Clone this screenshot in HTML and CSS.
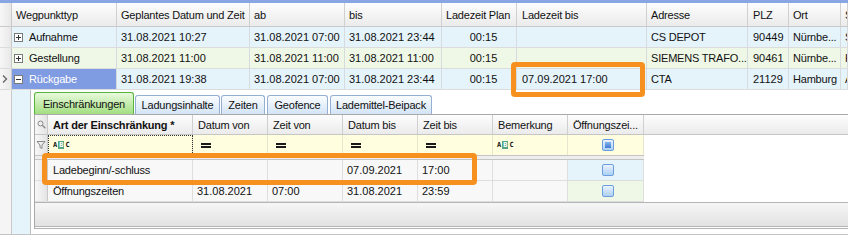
FILE: index.html
```html
<!DOCTYPE html>
<html lang="de">
<head>
<meta charset="utf-8">
<title>Wegpunkte</title>
<link rel="stylesheet" href="styles.css">
</head>
<body>
<div class="grid">
  <div class="topbar"></div>
  <div class="row head">
    <div class="ind"></div>
    <div class="cell w-typ">Wegpunkttyp</div>
    <div class="cell w-gep">Geplantes Datum und Zeit</div>
    <div class="cell w-ab">ab</div>
    <div class="cell w-bis">bis</div>
    <div class="cell w-plan">Ladezeit Plan</div>
    <div class="cell w-lbis">Ladezeit bis</div>
    <div class="cell w-adr">Adresse</div>
    <div class="cell w-plz">PLZ</div>
    <div class="cell w-ort">Ort</div>
    <div class="cell w-rest">S</div>
  </div>
  <div class="row blue">
    <div class="ind"></div>
    <div class="cell w-typ tree"><svg class="exp" width="9" height="9" viewBox="0 0 9 9"><rect x=".5" y=".5" width="8" height="8" fill="#fff" stroke="#7a7a7a"/><path d="M2 4.5h5M4.5 2v5" stroke="#333"/></svg>Aufnahme</div>
    <div class="cell w-gep">31.08.2021 10:27</div>
    <div class="cell w-ab">31.08.2021 07:00</div>
    <div class="cell w-bis">31.08.2021 23:44</div>
    <div class="cell w-plan cen">00:15</div>
    <div class="cell w-lbis"></div>
    <div class="cell w-adr">CS DEPOT</div>
    <div class="cell w-plz">90449</div>
    <div class="cell w-ort">Nürnbe...</div>
    <div class="cell w-rest">S</div>
  </div>
  <div class="row green">
    <div class="ind"></div>
    <div class="cell w-typ tree"><svg class="exp" width="9" height="9" viewBox="0 0 9 9"><rect x=".5" y=".5" width="8" height="8" fill="#fff" stroke="#7a7a7a"/><path d="M2 4.5h5M4.5 2v5" stroke="#333"/></svg>Gestellung</div>
    <div class="cell w-gep">31.08.2021 11:00</div>
    <div class="cell w-ab">31.08.2021 11:00</div>
    <div class="cell w-bis">31.08.2021 11:00</div>
    <div class="cell w-plan cen">00:15</div>
    <div class="cell w-lbis"></div>
    <div class="cell w-adr">SIEMENS TRAFO...</div>
    <div class="cell w-plz">90461</div>
    <div class="cell w-ort">Nürnbe...</div>
    <div class="cell w-rest">K</div>
  </div>
  <div class="row blue">
    <div class="ind"><svg class="chev" width="8" height="10" viewBox="0 0 8 10"><path d="M2 1.5l3.5 3.5-3.5 3.5" fill="none" stroke="#6a6a6a" stroke-width="1.4"/></svg></div>
    <div class="cell w-typ tree sel"><svg class="exp" width="9" height="9" viewBox="0 0 9 9"><rect x=".5" y=".5" width="8" height="8" fill="#fff" stroke="#7a7a7a"/><path d="M2 4.5h5" stroke="#333"/></svg>Rückgabe</div>
    <div class="cell w-gep">31.08.2021 19:38</div>
    <div class="cell w-ab">31.08.2021 07:00</div>
    <div class="cell w-bis">31.08.2021 23:44</div>
    <div class="cell w-plan cen">00:15</div>
    <div class="cell w-lbis">07.09.2021 17:00</div>
    <div class="cell w-adr">CTA</div>
    <div class="cell w-plz">21129</div>
    <div class="cell w-ort">Hamburg</div>
    <div class="cell w-rest">A</div>
  </div>
  <div class="detail">
    <div class="d-ind"></div>
    <div class="d-blue"></div>
    <div class="d-body">
      <div class="tabs">
        <div class="tab active t1">Einschränkungen</div>
        <div class="tab t2">Ladungsinhalte</div>
        <div class="tab t3">Zeiten</div>
        <div class="tab t4">Geofence</div>
        <div class="tab t5">Lademittel-Beipack</div>
      </div>
      <div class="inner">
        <div class="irow ihead">
          <div class="iind"><svg width="9" height="9" viewBox="0 0 9 9"><circle cx="3.5" cy="3.5" r="2.5" fill="none" stroke="#8a8a8a"/><path d="M5.3 5.3L8.3 8.3" stroke="#8a8a8a" stroke-width="1.4"/></svg></div>
          <div class="ic w-art bold">Art der Einschränkung *</div>
          <div class="ic w-b">Datum von</div>
          <div class="ic w-b">Zeit von</div>
          <div class="ic w-b">Datum bis</div>
          <div class="ic w-b">Zeit bis</div>
          <div class="ic w-b">Bemerkung</div>
          <div class="ic w-o">Öffnungszei...</div>
          <div class="hfill"></div>
        </div>
        <div class="irow ifilter">
          <div class="iind"><svg width="10" height="10" viewBox="0 0 10 10"><path d="M1 1.5h8L6 5v3.5L4 7.5V5z" fill="none" stroke="#8a8a8a"/></svg></div>
          <div class="ic w-art focus"><span class="abc"><i>A</i><b>B</b><i>C</i></span></div>
          <div class="ic w-b"><span class="eq"></span></div>
          <div class="ic w-b"><span class="eq"></span></div>
          <div class="ic w-b"><span class="eq"></span></div>
          <div class="ic w-b"><span class="eq"></span></div>
          <div class="ic w-b"><span class="abc"><i>A</i><b>B</b><i>C</i></span></div>
          <div class="ic w-o cen"><span class="cb"><span class="cb-in"></span></span></div>
        </div>
        <div class="isep"></div>
        <div class="irow idata">
          <div class="iind"></div>
          <div class="ic w-art">Ladebeginn/-schluss</div>
          <div class="ic w-b"></div>
          <div class="ic w-b"></div>
          <div class="ic w-b">07.09.2021</div>
          <div class="ic w-b">17:00</div>
          <div class="ic w-b"></div>
          <div class="ic w-o cen cblue"><span class="cb"></span></div>
        </div>
        <div class="irow idata">
          <div class="iind"></div>
          <div class="ic w-art">Öffnungszeiten</div>
          <div class="ic w-b">31.08.2021</div>
          <div class="ic w-b">07:00</div>
          <div class="ic w-b">31.08.2021</div>
          <div class="ic w-b">23:59</div>
          <div class="ic w-b"></div>
          <div class="ic w-o cen cgreen"><span class="cb"></span></div>
        </div>
        <div class="ifooter"></div>
      </div>
    </div>
  </div>
</div>
<div class="mark mark1"></div>
<div class="mark mark2"></div>
</body>
</html>
```
FILE: styles.css
```css
* { box-sizing: border-box; }
body {
  margin: 0;
  width: 848px;
  height: 251px;
  overflow: hidden;
  position: relative;
  background: #fff;
  font: 11px "Liberation Sans", Arial, sans-serif;
  letter-spacing: -0.2px;
  color: #111;
}
.grid { width: 848px; overflow: hidden; }
.topbar { height: 3px; background: #8aa5e4; }

.row { display: flex; height: 21px; border-bottom: 1px solid #dcdcdc; }
.row.head { height: 24px; border-bottom: 1px solid #c9c9c9; }
.cell {
  flex: none;
  display: flex;
  align-items: center;
  padding-left: 4px;
  border-right: 1px solid #d7dbe0;
  white-space: nowrap;
  overflow: hidden;
}
.head .cell { background: linear-gradient(#fdfdfd, #ebebeb); border-right-color: #d0d0d0; }
.row:not(.head) .w-gep,
.row:not(.head) .w-ab,
.row:not(.head) .w-bis,
.row:not(.head) .w-plan,
.row:not(.head) .w-lbis,
.row:not(.head) .w-plz,
.idata .w-b { letter-spacing: 0; }
.ind {
  flex: none;
  width: 12px;
  background: linear-gradient(90deg, #f7f7f7, #e8e8e8);
  border-right: 1px solid #c9c9c9;
  display: flex;
  align-items: center;
}
.chev { margin-left: 1px; }
.blue { background: #e5f3fb; }
.green { background: #eff8e6; }
.sel { background: #7f9be1; color: #fff; }
.tree { padding-left: 2px; }
.exp { flex: none; margin-right: 6px; }
.cen { justify-content: center; padding-left: 9px; }

.w-typ { width: 105px; }
.w-gep { width: 133px; }
.w-ab { width: 95px; }
.w-bis { width: 97px; }
.w-plan { width: 75px; }
.w-lbis { width: 130px; padding-left: 5px; }
.w-adr { width: 101px; }
.w-plz { width: 41px; padding-left: 5px; }
.w-ort { width: 52px; }
.w-rest { flex: 1; min-width: 0; }

.detail { display: flex; height: 145px; border-bottom: 1px solid #c4c4c4; }
.d-ind { flex: none; width: 12px; background: #f5f5f5; border-right: 1px solid #c9c9c9; }
.d-blue { flex: none; width: 19px; background: #e5f3fb; border-right: 1px solid #bcbcbc; }
.d-body { flex: 1; min-width: 0; padding: 2px 0 0 3px; background: #fff; }

.tabs { display: flex; align-items: flex-end; height: 22px; }
.tab {
  flex: none;
  height: 19px;
  margin-right: 1px;
  border: 1px solid #94afd2;
  border-bottom: none;
  border-radius: 3px 3px 0 0;
  background: linear-gradient(#fbfdff, #d3e4f6);
  display: flex;
  align-items: center;
  justify-content: center;
  white-space: nowrap;
}
.tab.active {
  height: 22px;
  border-color: #56b43a;
  background: linear-gradient(#e8fadd, #a2de80);
}
.t1 { width: 100px; }
.t2 { width: 85px; }
.t3 { width: 44px; margin-right: 2px; }
.t4 { width: 61px; margin-right: 2px; }
.t5 { width: 102px; }

.inner {
  border-top: 1px solid #a9a9a9;
  border-left: 1px solid #a9a9a9;
  border-bottom: 1px solid #b3b3b3;
  padding-bottom: 1px;
}
.irow { display: flex; height: 21px; }
.ihead { height: 20px; border-bottom: 1px solid #c6c6c6; }
.iind {
  flex: none;
  width: 13px;
  background: linear-gradient(90deg, #f8f8f8, #e4e4e4);
  border-right: 1px solid #c9c9c9;
  display: flex;
  align-items: center;
  justify-content: center;
}
.ic {
  flex: none;
  display: flex;
  align-items: center;
  padding-left: 4px;
  border-right: 1px solid #dedede;
  white-space: nowrap;
  overflow: hidden;
}
.ihead .ic { background: linear-gradient(#fdfdfd, #ebebeb); border-right-color: #cfcfcf; padding-left: 5px; }
.hfill { flex: 1; background: linear-gradient(#fdfdfd, #ebebeb); }
.bold { font-weight: bold; }
.w-art { width: 145px; padding-left: 5px; }
.w-b { width: 75px; }
.w-o { width: 76px; }

.ifilter { height: 20px; }
.ifilter .ic { background: #ffffe0; border-right-color: #e6e6cc; }
.focus { outline: 1px dotted #333; outline-offset: -1px; }
.eq {
  width: 10px;
  height: 5px;
  margin-left: 4px;
  border-top: 2px solid #1a1a1a;
  border-bottom: 2px solid #1a1a1a;
}
.abc { display: flex; align-items: center; font: bold 7px "DejaVu Sans Mono", monospace; line-height: 8px; letter-spacing: 0; color: #111; }
.abc i { font-style: normal; }
.abc b { background: #55a784; color: #fff; padding: 0 1px; margin: 0 1px; }

.isep {
  width: 609px;
  height: 5px;
  border-top: 1px solid #c4c4c4;
  border-bottom: 1px solid #c4c4c4;
  background: #eeeeee;
}
.idata { border-bottom: 1px solid #dedede; width: 609px; }
.idata .ic { background: #f8f8f8; }
.idata .cblue { background: #e5f3fb; }
.idata .cgreen { background: #eff8e6; }

.cb {
  display: block;
  width: 12px;
  height: 12px;
  border: 1px solid #6b9ddf;
  border-radius: 2px;
  background: linear-gradient(#eaf3fd, #acd0f5);
}
.cb-in { display: block; margin: 2px; height: 6px; background: linear-gradient(#86b5ec, #3f7ad0); }

.ifooter {
  height: 25px;
  border-top: 1px solid #b5b5b5;
  border-bottom: 1px solid #b5b5b5;
  background: linear-gradient(#f6f6f6, #e2e2e2);
}

.mark { position: absolute; border: 5px solid #f6901e; border-radius: 4px; }
.mark1 { left: 511px; top: 62px; width: 134px; height: 35px; }
.mark2 { left: 42px; top: 153px; width: 435px; height: 32px; }
```
